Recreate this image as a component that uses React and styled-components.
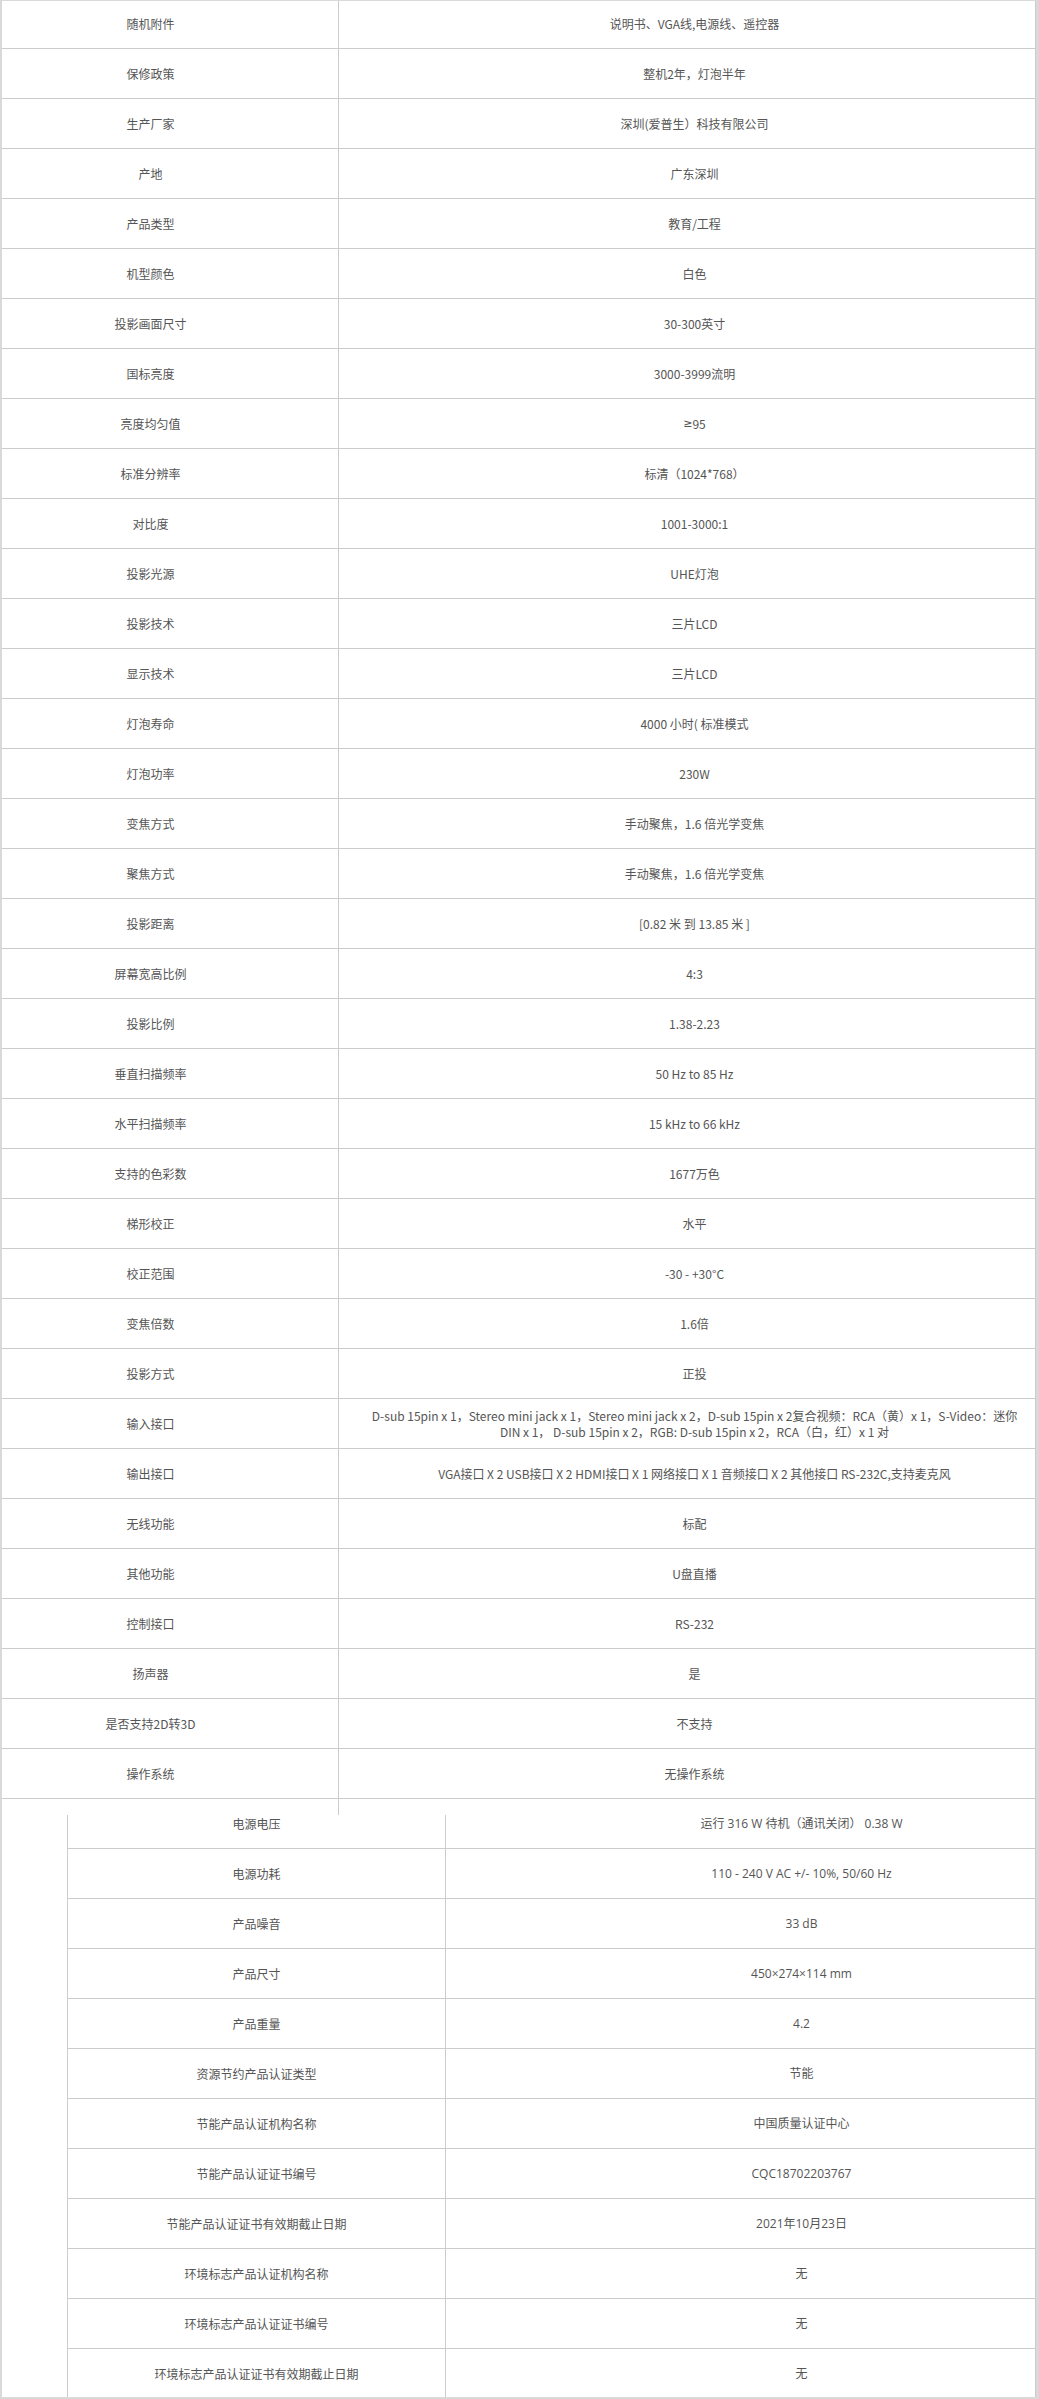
import React from "react";
import styled, { createGlobalStyle } from "styled-components";

const GlobalStyle = createGlobalStyle`
  body {
    margin: 0;
    background: #fff;
    font-family: "Noto Sans CJK SC", "Noto Sans", sans-serif;
  }
`;

const Frame = styled.div`
  width: 1039px;
  box-sizing: border-box;
  border-style: solid;
  border-color: #d9d9d9;
  border-width: 1px 3px 2px 2px;
  background: #fff;
`;

const Clip = styled.div`
  height: 2396px;
  overflow: hidden;
  border-right: 1px solid #cccccc;
`;

const Table = styled.div`
  display: flex;
  flex-direction: column;
  width: ${(p) => p.$width}px;
  margin: ${(p) => p.$margin};
  border-left: ${(p) => (p.$bordered ? "1px solid #cccccc" : "none")};
`;

const Row = styled.div`
  display: grid;
  grid-template-columns: ${(p) => p.$cols};
  height: ${(p) => (p.$short ? 33 : 49)}px;
  border-bottom: 1px solid #cccccc;
`;

const Cell = styled.div`
  display: flex;
  align-items: ${(p) => (p.$top ? "flex-start" : "center")};
  justify-content: center;
  text-align: center;
  padding: 0 10px;
  font-size: 12px;
  line-height: ${(p) => (p.$top ? "18px" : "16px")};
  color: #555555;
  font-family: ${(p) =>
    p.$latin
      ? `"Open Sans", "Noto Sans CJK SC", sans-serif`
      : `"Noto Sans CJK SC", "Noto Sans", sans-serif`};
  border-right: ${(p) => (p.$divider ? "1px solid #cccccc" : "none")};
  white-space: nowrap;
`;

const Lines = styled.span`
  display: block;
  text-align: center;
`;

const Symbol = styled.span`
  font-family: "DejaVu Sans", sans-serif;
  font-size: 11px;
`;

const Tail = styled.div`
  width: 375px;
  height: 16px;
  margin-left: -39px;
  border-right: 1px solid #cccccc;
`;

const specs = [
  ["随机附件", "说明书、VGA线,电源线、遥控器"],
  ["保修政策", "整机2年，灯泡半年"],
  ["生产厂家", "深圳(爱普生）科技有限公司"],
  ["产地", "广东深圳"],
  ["产品类型", "教育/工程"],
  ["机型颜色", "白色"],
  ["投影画面尺寸", "30-300英寸"],
  ["国标亮度", "3000-3999流明"],
  ["亮度均匀值", <><Symbol>≥</Symbol>95</>],
  ["标准分辨率", "标清（1024*768）"],
  ["对比度", "1001-3000:1"],
  ["投影光源", "UHE灯泡"],
  ["投影技术", "三片LCD"],
  ["显示技术", "三片LCD"],
  ["灯泡寿命", "4000 小时( 标准模式"],
  ["灯泡功率", "230W"],
  ["变焦方式", "手动聚焦，1.6 倍光学变焦"],
  ["聚焦方式", "手动聚焦，1.6 倍光学变焦"],
  ["投影距离", "[0.82 米 到 13.85 米 ]"],
  ["屏幕宽高比例", "4:3"],
  ["投影比例", "1.38-2.23"],
  ["垂直扫描频率", "50 Hz to 85 Hz"],
  ["水平扫描频率", "15 kHz to 66 kHz"],
  ["支持的色彩数", "1677万色"],
  ["梯形校正", "水平"],
  ["校正范围", "-30 - +30°C"],
  ["变焦倍数", "1.6倍"],
  ["投影方式", "正投"],
  [
    "输入接口",
    [
      "D-sub 15pin x 1，Stereo mini jack x 1，Stereo mini jack x 2，D-sub 15pin x 2复合视频：RCA（黄）x 1，S-Video：迷你",
      "DIN x 1， D-sub 15pin x 2，RGB: D-sub 15pin x 2，RCA（白，红）x 1 对",
    ],
  ],
  [
    "输出接口",
    "VGA接口 X 2 USB接口 X 2 HDMI接口 X 1 网络接口 X 1 音频接口 X 2 其他接口 RS-232C,支持麦克风",
  ],
  ["无线功能", "标配"],
  ["其他功能", "U盘直播"],
  ["控制接口", "RS-232"],
  ["扬声器", "是"],
  ["是否支持2D转3D", "不支持"],
  ["操作系统", "无操作系统"],
];

const power = [
  ["电源电压", "运行 316 W 待机（通讯关闭） 0.38 W"],
  ["电源功耗", "110 - 240 V AC +/- 10%, 50/60 Hz"],
  ["产品噪音", "33 dB"],
  ["产品尺寸", "450×274×114 mm"],
  ["产品重量", "4.2"],
  ["资源节约产品认证类型", "节能"],
  ["节能产品认证机构名称", "中国质量认证中心"],
  ["节能产品认证证书编号", "CQC18702203767"],
  ["节能产品认证证书有效期截止日期", "2021年10月23日"],
  ["环境标志产品认证机构名称", "无"],
  ["环境标志产品认证证书编号", "无"],
  ["环境标志产品认证证书有效期截止日期", "无"],
];

// multi-line values come in as an array, one entry per line
const renderValue = (value) =>
  Array.isArray(value) ? (
    <Lines>
      {value.map((line, i) => (
        <React.Fragment key={i}>
          {i > 0 && <br />}
          {line}
        </React.Fragment>
      ))}
    </Lines>
  ) : (
    value
  );

const App = () => {
  return (
    <>
      <GlobalStyle />
      <Frame>
        <Clip>
          <Table $width={1087} $margin="-2px 0 0 -39px">
            {specs.map(([label, value]) => (
              <Row key={label} $cols="376px 711px">
                <Cell $divider>{label}</Cell>
                <Cell>{renderValue(value)}</Cell>
              </Row>
            ))}
          </Table>
          <Tail />
          <Table $width={1090} $margin="0 0 0 65px" $bordered>
            {power.map(([label, value], i) => (
              <Row key={label} $cols="378px 711px" $short={i === 0}>
                <Cell $divider $top={i === 0}>
                  {label}
                </Cell>
                <Cell $latin $top={i === 0}>
                  {value}
                </Cell>
              </Row>
            ))}
          </Table>
        </Clip>
      </Frame>
    </>
  );
};

export default App;
